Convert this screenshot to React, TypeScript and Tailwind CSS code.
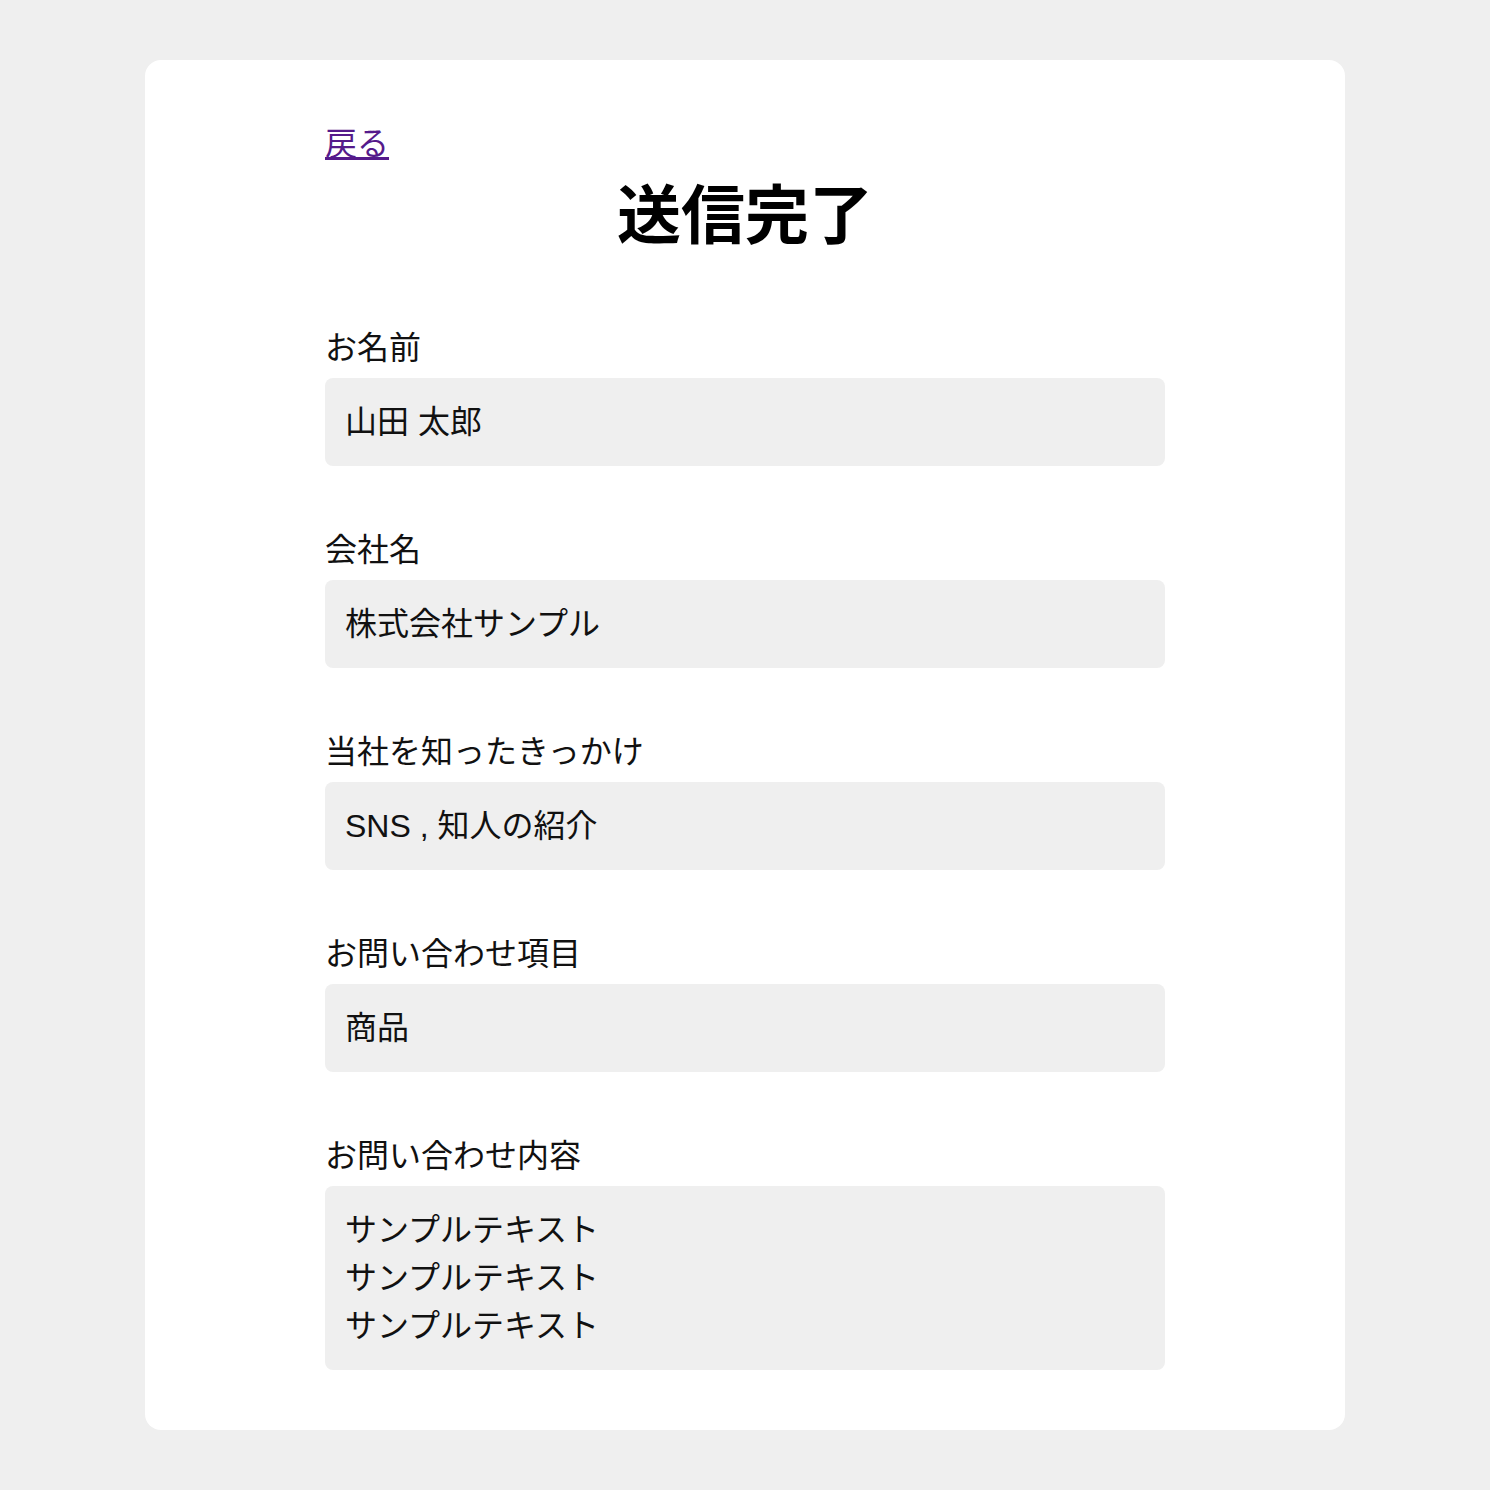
const fields = [
  { label: 'お名前', value: '山田 太郎' },
  { label: '会社名', value: '株式会社サンプル' },
  { label: '当社を知ったきっかけ', value: 'SNS , 知人の紹介' },
  { label: 'お問い合わせ項目', value: '商品' },
];

const message = ['サンプルテキスト', 'サンプルテキスト', 'サンプルテキスト'];

export default function App() {
  return (
    <div className="min-h-[1490px] bg-[#efefef] p-[60px] font-['Liberation_Sans','Noto_Sans_CJK_JP',sans-serif] text-[#111]">
      <div className="mx-auto w-[1200px] rounded-2xl bg-white px-[180px] pt-[60px] pb-[60px]">
        <a href="#" className="text-[32px] leading-[48px] text-[#551a8b] underline">
          戻る
        </a>
        <h1 className="text-center text-[64px] leading-[96px] font-bold text-black">送信完了</h1>

        {fields.map((f) => (
          <div key={f.label} className="mt-[60px]">
            <p className="mb-[6px] text-[32px] leading-[48px]">{f.label}</p>
            <div className="rounded-lg bg-[#efefef] px-5 py-5 text-[32px] leading-[48px]">{f.value}</div>
          </div>
        ))}

        <div className="mt-[60px]">
          <p className="mb-[6px] text-[32px] leading-[48px]">お問い合わせ内容</p>
          <div className="rounded-lg bg-[#efefef] px-5 py-5 text-[32px] leading-[48px]">
            {message.map((line, i) => (
              <div key={i}>{line}</div>
            ))}
          </div>
        </div>
      </div>
    </div>
  );
}
